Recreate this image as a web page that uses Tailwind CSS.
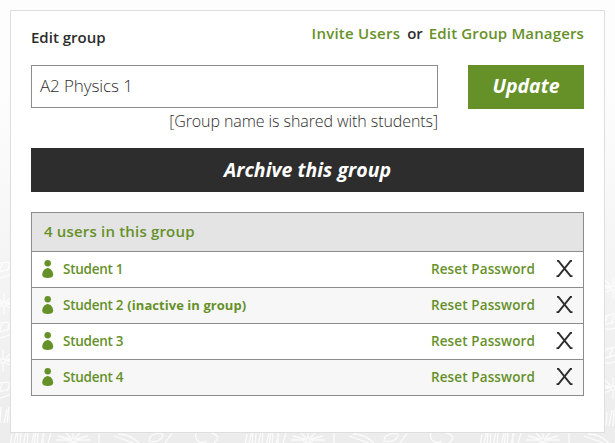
<!DOCTYPE html>
<html lang="en">
<head>
<meta charset="utf-8">
<title>Edit group</title>
<script src="https://cdn.jsdelivr.net/npm/@tailwindcss/browser@4"></script>
</head>
<body class="relative h-[443px] w-[615px] overflow-hidden bg-linear-to-b from-[#fdfdfd] from-20% to-[#ececec] p-[10px] font-['Open_Sans',sans-serif] text-[#2d2d2d]">
<svg class="absolute inset-0" width="615" height="443" fill="none" stroke="#fff" stroke-opacity=".8" stroke-width="1.3" aria-hidden="true">
  <defs>
    <g id="flower"><circle r="2"/><path d="M0-3V-11M2-2L8-8M3 0H17M2 2L12 6M0 3V11M-2 2L-12 6M-3 0H-17M-2-2L-8-8M3-1L15-4M-3-1L-15-4"/></g>
    <g id="leaf"><path d="M-18 6C-12-8 4-10 18-5C10 7-4 11-18 6ZM-18 6C-6 3 6 0 18-5M-10 4L-7-4M-3 3L0-6M5 1L8-7"/></g>
    <g id="grass"><path d="M-20 8L-18-5M-17 8L-13-8M-13 8L-12-8M-10 8L-9-6M-7 8L-4-8M-3 8L-2-8M1 8L4-6M4 8L6-8M7 8L8-8M10 8L14-5M13 8V-8M17 8L21-6"/></g>
    <g id="strip">
      <use href="#grass" x="30" y="439"/><use href="#flower" x="73" y="440"/><path d="M99 433V443"/>
      <path d="M114 436L134 443M118 434Q130 434 139 443M149 441C149 435 157 432 163 434C163 440 155 443 149 441ZM165 443L172 433"/>
      <path d="M196 433C194 440 200 445 207 441M211 433C218 434 220 439 214 443"/>
    </g>
  </defs>
  <use href="#strip"/><use href="#strip" x="235"/><use href="#strip" x="470"/>
  <use href="#flower" x="3" y="361"/><use href="#grass" x="3" y="415"/><use href="#leaf" x="2" y="390"/><use href="#leaf" x="2" y="330"/><use href="#flower" x="4" y="304"/><use href="#leaf" x="2" y="270"/>
  <use href="#flower" x="613" y="388"/><use href="#leaf" x="612" y="355"/><use href="#leaf" x="614" y="321"/><use href="#flower" x="613" y="288"/><use href="#grass" x="616" y="418"/>
</svg>
<main class="relative flex h-[423px] w-[595px] flex-col border border-[#dedede] bg-white px-5 text-[15px] leading-5">
  <header class="flex h-[54px] justify-between whitespace-nowrap font-semibold">
    <h1 class="pt-4">Edit group</h1>
    <div class="flex pt-3">
      <a class="mr-[7px] tracking-[0.25px] text-[#669129]">Invite Users</a><span class="mr-[6px]">or</span><a class="tracking-[0.14px] text-[#669129]">Edit Group Managers</a>
    </div>
  </header>
  <form class="flex justify-between">
    <div class="w-[407px]">
      <div class="flex h-[43px] items-center border border-[#8c8c8c] px-2 pb-0.5 text-[17px] font-light tracking-[-0.1px]">A2 Physics 1</div>
      <p class="mt-[3px] whitespace-nowrap text-right text-[16px] font-light tracking-[-0.08px]">[Group name is shared with students]</p>
    </div>
    <button type="button" class="h-11 w-[116px] bg-[#669129] pb-0.5 text-[19.5px] font-bold italic text-white">Update</button>
  </form>
  <button type="button" class="mt-[17px] h-11 shrink-0 bg-[#2d2d2d] text-[19.5px] font-bold italic tracking-[0.02px] text-white">Archive this group</button>
  <section class="mt-5 border border-[#8c8c8c] text-[#669129]">
    <h2 class="h-[38px] bg-[#e4e4e4] pl-3 pt-2 font-semibold tracking-[0.18px]">4 users in this group</h2>
    <ul id="users" class="text-[13.5px] font-semibold"></ul>
  </section>
</main>
<template id="user-row">
  <li class="flex h-9 items-center whitespace-nowrap border-t border-[#8c8c8c] pb-0.5 pl-[10px] pr-[10px] even:bg-[#f7f7f7]">
    <svg class="mr-[9px]" width="12" height="18" fill="#669129"><circle cx="5.7" cy="3.2" r="3.2"/><path d="M5.7 8C8.7 8 11.2 11.8 11.2 14.8C11.2 16.9 8.9 18 5.7 18S.2 16.9 .2 14.8C.2 11.8 2.7 8 5.7 8Z"/></svg>
    <span class="name tracking-[-0.26px]"></span><b class="note ml-[4px] text-[13px] font-bold tracking-[0.05px]"></b>
    <a class="ml-auto mr-[21px] tracking-[0.12px]">Reset Password</a>
    <svg width="17" height="17" fill="none" stroke="#2d2d2d" stroke-width="1.9"><path d="M1 .9H2.4L14.6 16.1H16.5M16 .9H14.6L2.4 16.1H.5"/></svg>
  </li>
</template>
<script>
const tpl = document.getElementById('user-row');
[['Student 1', ''], ['Student 2', '(inactive in group)'], ['Student 3', ''], ['Student 4', '']].forEach(([name, note]) => {
  const row = tpl.content.cloneNode(true);
  row.querySelector('.name').textContent = name;
  row.querySelector('.note').textContent = note;
  document.getElementById('users').append(row);
});
</script>
</body>
</html>
